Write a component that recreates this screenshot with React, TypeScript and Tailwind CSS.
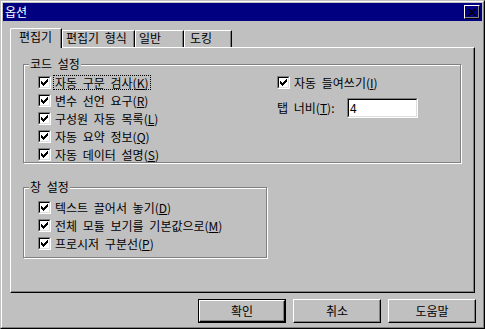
import type { ReactNode } from "react"

const CHECK = ["......#", ".....##", "#...###", "##.###.", "#####..", ".###...", "..#...."]
const CLOSE = ["##....##", ".##..##.", "..####..", "...##...", "..####..", ".##..##.", "##....##"]

function Pixels({ rows }: { rows: string[] }) {
  const w = rows[0].length
  const h = rows.length
  return (
    <svg width={w} height={h} viewBox={`0 0 ${w} ${h}`} shapeRendering="crispEdges" className="block">
      {rows.flatMap((r, y) =>
        r.split("").map((c, x) => (c === "#" ? <rect key={`${x}-${y}`} x={x} y={y} width={1} height={1} fill="#000" /> : null))
      )}
    </svg>
  )
}

function CheckBox() {
  return (
    <span className="block w-[13px] h-[13px] shrink-0 border border-t-[#808080] border-l-[#808080] border-r-white border-b-white">
      <span className="flex w-full h-full items-start justify-start p-px bg-white border border-t-black border-l-black border-r-[#dfdfdf] border-b-[#dfdfdf]">
        <Pixels rows={CHECK} />
      </span>
    </span>
  )
}

function CheckRow({ children, focus }: { children: ReactNode; focus?: boolean }) {
  return (
    <div className="flex items-center h-[18px]">
      <CheckBox />
      <span className={`ml-[2px] pl-px pr-px leading-[13px] border border-dotted whitespace-nowrap ${focus ? "border-black" : "border-transparent"}`}>
        {children}
      </span>
    </div>
  )
}

function Group({ title, className, children }: { title: string; className: string; children: ReactNode }) {
  return (
    <div className={`relative border border-[#808080] shadow-[inset_1px_1px_0_#fff,1px_1px_0_#fff] ${className}`}>
      <span className="absolute -top-[8px] left-[5px] px-px bg-[#c0c0c0] leading-[14px] whitespace-nowrap">{title}</span>
      {children}
    </div>
  )
}

function Button({ children, def }: { children: ReactNode; def?: boolean }) {
  return (
    <div className={`w-[88px] h-[24px] ${def ? "border border-black" : ""}`}>
      <div className="w-full h-full flex items-center justify-center border border-t-white border-l-white border-r-black border-b-black shadow-[inset_-1px_-1px_0_#808080]">
        {children}
      </div>
    </div>
  )
}

export default function App() {
  return (
    <div className="w-[485px] h-[329px] bg-[#c0c0c0] text-black text-[12px] leading-[14px] [word-spacing:3px] font-['Noto_Sans_CJK_KR','Noto_Sans',sans-serif] border border-t-[#c0c0c0] border-l-[#c0c0c0] border-r-black border-b-black">
      <div className="h-full flex flex-col p-px border border-t-white border-l-white border-r-[#808080] border-b-[#808080]">
        {/* Title bar */}
        <div className="h-[18px] shrink-0 bg-[#000080] flex items-center justify-between pl-[2px] pr-[2px]">
          <span className="text-white">옵션</span>
          <div className="w-[16px] h-[14px] flex items-center justify-center border border-t-white border-l-white border-r-black border-b-black shadow-[inset_-1px_-1px_0_#808080]">
            <Pixels rows={CLOSE} />
          </div>
        </div>

        <div className="flex flex-col px-[7px] pt-[7px]">
          {/* Tabs */}
          <div className="flex h-[19px]">
            <div className="relative z-10 w-[52px] h-[20px] bg-[#c0c0c0] pl-[8px] pt-px border-l border-t border-r border-l-white border-t-white border-r-black shadow-[inset_-1px_0_0_#808080] rounded-tl-[2px]">
              편집기
            </div>
            <div className="mt-[2px] w-[73px] h-[17px] pl-[3px] border-l border-t border-r border-l-white border-t-white border-r-black shadow-[inset_-1px_0_0_#808080] whitespace-nowrap">
              편집기 형식
            </div>
            <div className="mt-[2px] w-[49px] h-[17px] pl-[3px] border-l border-t border-r border-l-white border-t-white border-r-black shadow-[inset_-1px_0_0_#808080]">
              일반
            </div>
            <div className="mt-[2px] w-[48px] h-[17px] pl-[5px] border-l border-t border-r border-l-white border-t-white border-r-black shadow-[inset_-1px_0_0_#808080]">
              도킹
            </div>
          </div>

          {/* Tab panel */}
          <div className="h-[246px] border border-l-white border-t-white border-r-black border-b-black shadow-[inset_-1px_-1px_0_#808080] pl-[12px] pt-[16px]">
            <Group title="코드 설정" className="w-[438px] h-[99px]">
              <div className="flex pl-[14px] pt-[8px]">
                <div className="w-[239px] flex flex-col">
                  <CheckRow focus>자동 구문 검사(<u>K</u>)</CheckRow>
                  <CheckRow>변수 선언 요구(<u>R</u>)</CheckRow>
                  <CheckRow>구성원 자동 목록(<u>L</u>)</CheckRow>
                  <CheckRow>자동 요약 정보(<u>Q</u>)</CheckRow>
                  <CheckRow>자동 데이터 설명(<u>S</u>)</CheckRow>
                </div>
                <div className="flex flex-col">
                  <CheckRow>자동 들여쓰기(<u>I</u>)</CheckRow>
                  <div className="flex items-center mt-[7px]">
                    <span className="w-[70px] whitespace-nowrap">탭 너비(<u>T</u>):</span>
                    <div className="w-[71px] h-[20px] border border-t-[#808080] border-l-[#808080] border-r-white border-b-white">
                      <div className="w-full h-full bg-white pl-px leading-[16px] border border-t-black border-l-black border-r-[#dfdfdf] border-b-[#dfdfdf]">
                        4
                      </div>
                    </div>
                  </div>
                </div>
              </div>
            </Group>

            <Group title="창 설정" className="mt-[24px] w-[244px] h-[71px]">
              <div className="flex flex-col pl-[14px] pt-[10px]">
                <CheckRow>텍스트 끌어서 놓기(<u>D</u>)</CheckRow>
                <CheckRow>전체 모듈 보기를 기본값으로(<u>M</u>)</CheckRow>
                <CheckRow>프로시저 구분선(<u>P</u>)</CheckRow>
              </div>
            </Group>
          </div>

          {/* Buttons */}
          <div className="flex justify-end gap-[7px] mt-[6px] -mr-px">
            <Button def>확인</Button>
            <Button>취소</Button>
            <Button>도움말</Button>
          </div>
        </div>
      </div>
    </div>
  )
}
